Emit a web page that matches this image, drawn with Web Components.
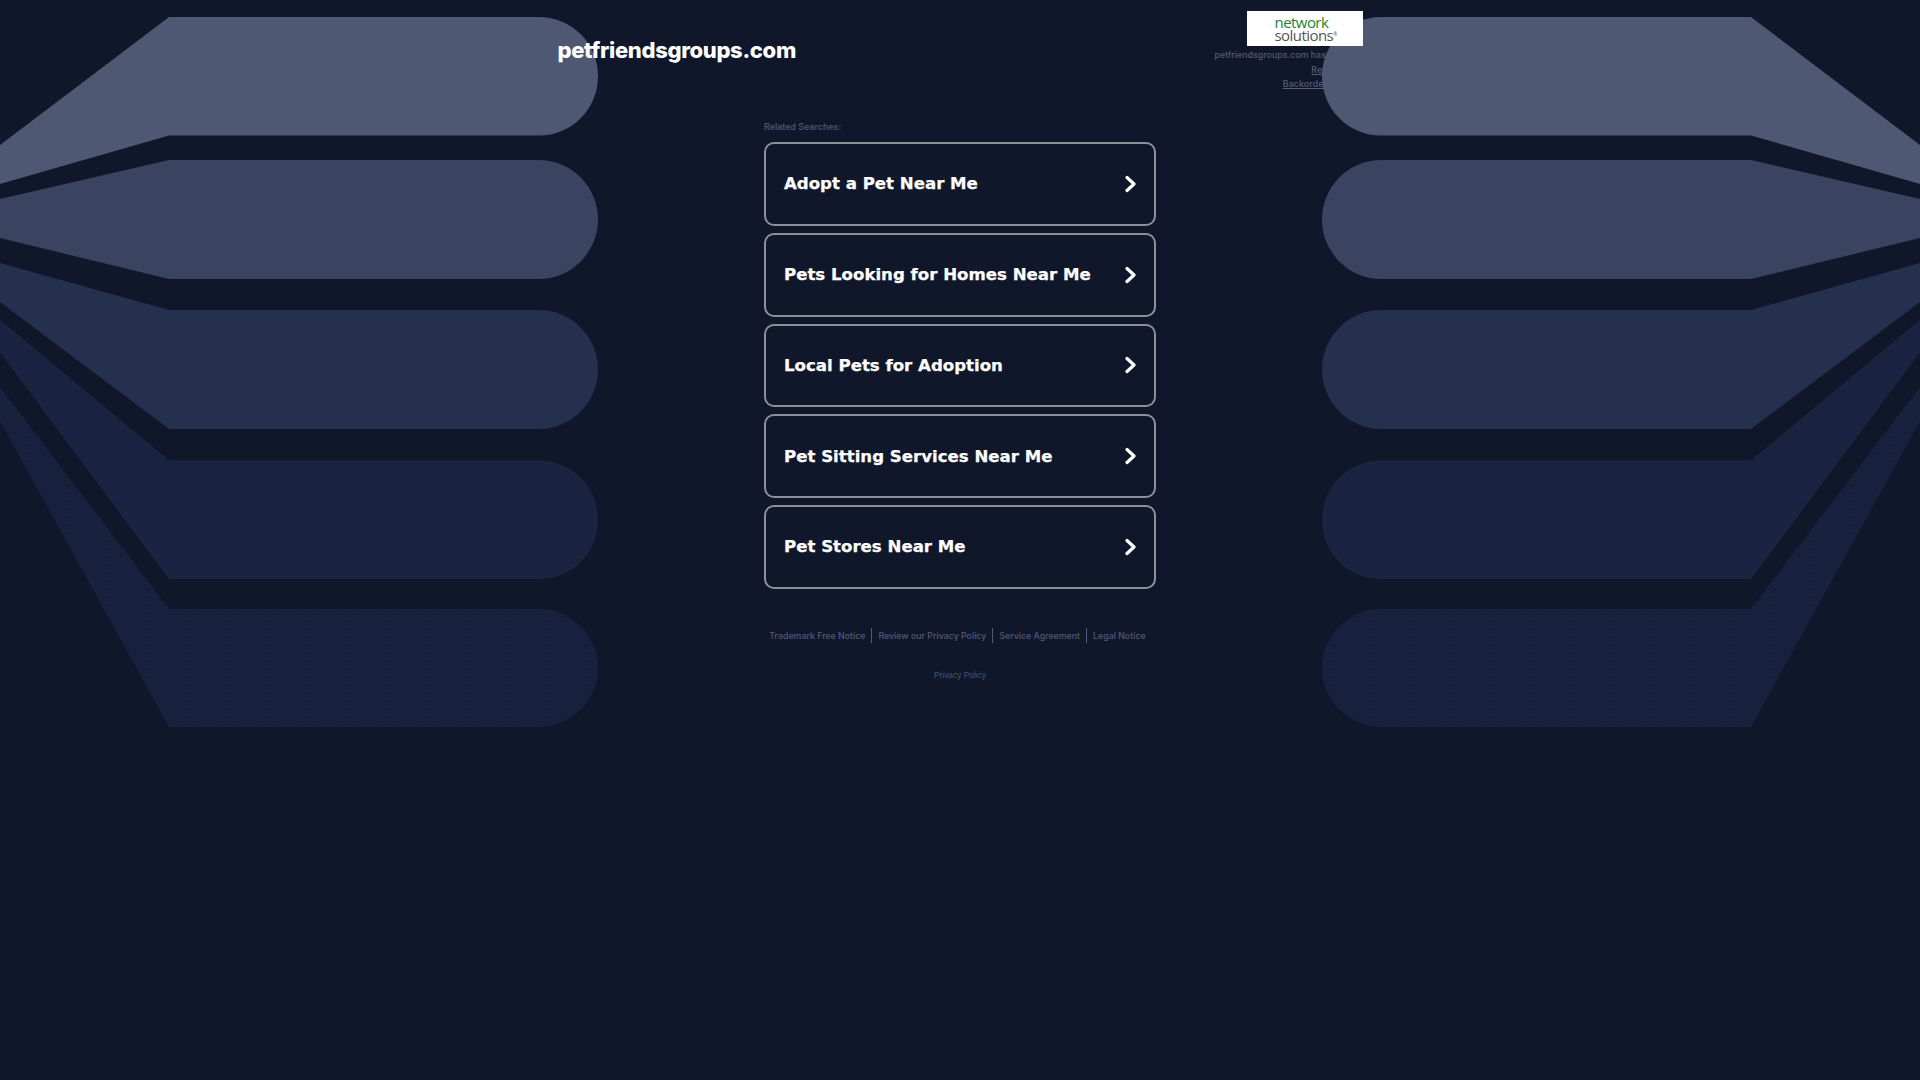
<!DOCTYPE html>
<html lang="en">
<head>
<meta charset="utf-8">
<title>petfriendsgroups.com</title>
<style>
  html, body { margin: 0; background: #10172b; }
</style>
</head>
<body>
<parked-page>
  <site-header slot="header" domain="petfriendsgroups.com"></site-header>
  <search-list slot="main" heading="Related Searches:">
    <search-link>Adopt a Pet Near Me</search-link>
    <search-link>Pets Looking for Homes Near Me</search-link>
    <search-link>Local Pets for Adoption</search-link>
    <search-link>Pet Sitting Services Near Me</search-link>
    <search-link>Pet Stores Near Me</search-link>
  </search-list>
  <site-footer slot="footer"></site-footer>
</parked-page>

<script>
// Background bands, drawn once on the left and mirrored for the right
const BANDS = [
  { top: 17, bottom: 135.5, leftTop: 145, leftBottom: 184, fill: '#4e5873' },
  { top: 160, bottom: 279, leftTop: 199, leftBottom: 238, fill: '#3a4460' },
  { top: 310, bottom: 429, leftTop: 263, leftBottom: 302, fill: '#252f4e' },
  { top: 460.5, bottom: 579, leftTop: 320, leftBottom: 352, fill: 'url(#dots-fine)' },
  { top: 609, bottom: 727, leftTop: 387, leftBottom: 421, fill: 'url(#dots-wide)' },
];

function bandPath(b) {
  const r = (b.bottom - b.top) / 2;
  return `M0 ${b.leftTop}L169 ${b.top}H539A59 ${r} 0 0 1 539 ${b.bottom}H169L0 ${b.leftBottom}Z`;
}

class BandBackdrop extends HTMLElement {
  constructor() {
    super();
    const shadow = this.attachShadow({ mode: 'open' });
    const paths = BANDS.map(b => `<path d="${bandPath(b)}" fill="${b.fill}"/>`).join('');
    shadow.innerHTML = `
      <style>
        :host { display: block; position: absolute; left: 0; top: 0; width: 1920px; height: 740px; z-index: 1; }
        svg { display: block; }
      </style>
      <svg width="1920" height="740" viewBox="0 0 1920 740">
        <defs>
          <pattern id="dots-fine" width="3" height="4" patternUnits="userSpaceOnUse">
            <rect width="3" height="4" fill="#19233f"/>
            <rect width="1" height="1" fill="#1d2848"/>
            <rect x="1.5" y="2" width="1" height="1" fill="#1d2848"/>
          </pattern>
          <pattern id="dots-wide" width="5" height="4" patternUnits="userSpaceOnUse">
            <rect width="5" height="4" fill="#18223f"/>
            <rect width="1" height="1" fill="#111a35"/>
            <rect x="2.5" y="2" width="1" height="1" fill="#111a35"/>
          </pattern>
        </defs>
        <g>${paths}</g>
        <g transform="translate(1920 0) scale(-1 1)">${paths}</g>
      </svg>`;
  }
}
customElements.define('band-backdrop', BandBackdrop);

class ParkedPage extends HTMLElement {
  constructor() {
    super();
    const shadow = this.attachShadow({ mode: 'open' });
    shadow.innerHTML = `
      <style>
        :host { display: block; position: relative; min-height: 1080px; background: #10172b; }
        .column { display: flex; flex-direction: column; align-items: center; }
      </style>
      <band-backdrop></band-backdrop>
      <div class="column">
        <slot name="header"></slot>
        <slot name="main"></slot>
        <slot name="footer"></slot>
      </div>`;
  }
}
customElements.define('parked-page', ParkedPage);

class SiteHeader extends HTMLElement {
  constructor() {
    super();
    const shadow = this.attachShadow({ mode: 'open' });
    const domain = this.getAttribute('domain');
    // .note stays unpositioned so the backdrop bands paint over it
    shadow.innerHTML = `
      <style>
        :host { display: flex; width: 805px; height: 117px; justify-content: space-between; }
        h1 {
          position: relative; z-index: 2; margin: 36px 0 0; height: 28px;
          font: 800 22px/28px Inter, "Liberation Sans", sans-serif;
          letter-spacing: -0.33px; color: #fff;
        }
        .side { display: flex; flex-direction: column; align-items: flex-end; padding-top: 11px; }
        .logo {
          position: relative; z-index: 2; box-sizing: border-box; width: 116px; height: 35px;
          background: #fff; display: flex; flex-direction: column; align-items: flex-start;
          padding: 5px 0 0 28px;
          font-family: "Open Sans", sans-serif; font-size: 15px; line-height: 12.5px; letter-spacing: -0.55px;
        }
        .logo .a { color: #1a8530; }
        .logo .b { color: #555; }
        .logo sup { font-size: 5px; line-height: 0; letter-spacing: 0; vertical-align: 5px; }
        .note {
          font: 500 8.85px/14.5px Inter, "Liberation Sans", sans-serif; color: #505a78;
          text-align: right; margin-top: 2px;
        }
        .note a { display: block; color: #545e7c; text-decoration: underline; letter-spacing: 0.12px; }
      </style>
      <h1>${domain}</h1>
      <div class="side">
        <div class="logo"><span class="a">network</span><span class="b">solutions<sup>&reg;</sup></span></div>
        <div class="note">
          ${domain} has expired.
          <a>Renew Now</a>
          <a>Backorder Domain</a>
        </div>
      </div>`;
  }
}
customElements.define('site-header', SiteHeader);

class SearchList extends HTMLElement {
  constructor() {
    super();
    const shadow = this.attachShadow({ mode: 'open' });
    shadow.innerHTML = `
      <style>
        :host { display: block; position: relative; z-index: 2; width: 392px; }
        .heading {
          font: 600 8.85px/12px Inter, "Liberation Sans", sans-serif; color: #4a5370;
          height: 25px; padding-top: 3.5px; box-sizing: border-box;
        }
        .links { display: flex; flex-direction: column; gap: 7px; }
      </style>
      <div class="heading">${this.getAttribute('heading')}</div>
      <div class="links"><slot></slot></div>`;
  }
}
customElements.define('search-list', SearchList);

class SearchLink extends HTMLElement {
  constructor() {
    super();
    const shadow = this.attachShadow({ mode: 'open' });
    shadow.innerHTML = `
      <style>
        :host {
          display: flex; box-sizing: border-box; height: 83.75px; align-items: center;
          justify-content: space-between; padding: 0 15px 0 18px;
          border: 2px solid #8d9097; border-radius: 10px;
          font: 700 16.6px/24px "DejaVu Sans", Verdana, sans-serif; color: #fff;
          -webkit-text-stroke: 0.25px #fff;
        }
        span { padding-top: 1px; }
        svg { display: block; flex: none; }
      </style>
      <span><slot></slot></span>
      <svg width="14" height="20" viewBox="0 0 14 20">
        <path d="M2 3.5 L9 10 L2 16.5" fill="none" stroke="#fff" stroke-width="3.2" stroke-linecap="round" stroke-linejoin="round"/>
      </svg>`;
  }
}
customElements.define('search-link', SearchLink);

class SiteFooter extends HTMLElement {
  constructor() {
    super();
    const shadow = this.attachShadow({ mode: 'open' });
    shadow.innerHTML = `
      <style>
        :host { display: flex; flex-direction: column; align-items: center; width: 392px; position: relative; z-index: 2; padding-top: 39px; }
        nav { display: flex; flex: none; white-space: nowrap; margin-right: 5px; font: 500 8.8px/15px Inter, "Liberation Sans", sans-serif; color: #505a78; }
        nav span { padding: 0 6px; border-left: 1px solid #505a78; }
        nav span:first-child { border-left: 0; }
        .policy { margin-top: 27px; font: 400 8.4px/10px "Liberation Sans", Arial, sans-serif; color: #4a5370; }
      </style>
      <nav>
        <span>Trademark Free Notice</span>
        <span>Review our Privacy Policy</span>
        <span>Service Agreement</span>
        <span>Legal Notice</span>
      </nav>
      <div class="policy">Privacy Policy</div>`;
  }
}
customElements.define('site-footer', SiteFooter);
</script>
</body>
</html>
